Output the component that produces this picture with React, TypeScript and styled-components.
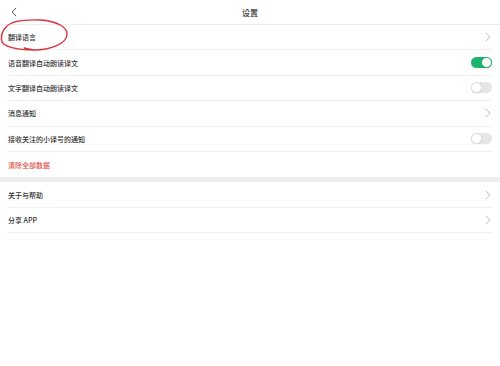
import styled, { createGlobalStyle } from "styled-components";

const GlobalStyle = createGlobalStyle`
  html, body {
    margin: 0;
    padding: 0;
    background: #ffffff;
  }
  body {
    font-family: "Noto Sans CJK SC", "Noto Sans", sans-serif;
    color: #333333;
  }
`;

type Item = {
  label: string;
  kind: "arrow" | "on" | "off" | "none";
  danger?: boolean;
};

const groupOne: Item[] = [
  { label: "翻译语言", kind: "arrow" },
  { label: "语音翻译自动朗读译文", kind: "on" },
  { label: "文字翻译自动朗读译文", kind: "off" },
  { label: "消息通知", kind: "arrow" },
  { label: "接收关注的小译号的通知", kind: "off" },
  { label: "清除全部数据", kind: "none", danger: true },
];

const groupTwo: Item[] = [
  { label: "关于与帮助", kind: "arrow" },
  { label: "分享 APP", kind: "arrow" },
];

const Chevron = ({ left }: { left?: boolean }) => (
  <svg width="6" height="10" viewBox="0 0 6 10" fill="none">
    <path
      d={left ? "M4.8 1.2 L1.2 5 L4.8 8.8" : "M1 1 L5 5 L1 9"}
      stroke={left ? "#444444" : "#bbbbbb"}
      strokeWidth={0.9}
      strokeLinecap="round"
      strokeLinejoin="round"
    />
  </svg>
);

const Row = ({ item, last }: { item: Item; last?: boolean }) => (
  <RowWrap>
    <RowInner $last={last}>
      <Label $danger={item.danger}>{item.label}</Label>
      {item.kind === "arrow" && <Chevron />}
      {item.kind === "on" && (
        <Toggle $on>
          <Knob $on />
        </Toggle>
      )}
      {item.kind === "off" && (
        <Toggle>
          <Knob />
        </Toggle>
      )}
    </RowInner>
  </RowWrap>
);

export default function App() {
  return (
    <Page>
      <GlobalStyle />
      <Header>
        <BackBtn>
          <Chevron left />
        </BackBtn>
        <Title>设置</Title>
      </Header>
      <Group>
        {groupOne.map((it, i) => (
          <Row key={it.label} item={it} last={i === groupOne.length - 1} />
        ))}
      </Group>
      <Spacer />
      <Group>
        {groupTwo.map((it) => (
          <Row key={it.label} item={it} />
        ))}
      </Group>
      {/* hand drawn red mark around the first row */}
      <Circle width="70" height="36" viewBox="0 0 70 36" fill="none">
        <path
          d="M6 9 C11 3, 25 1.5, 40 2 C58 3, 68 10, 67 17 C66 26, 50 32, 34 32 C18 32, 2 29, 1.5 22 C1 16, 3 12, 6 9 M34 32 C30 31.5, 27 31, 24.5 30"
          stroke="#d8333b"
          strokeWidth="1.4"
          strokeLinecap="round"
        />
      </Circle>
    </Page>
  );
}

const Page = styled.div`
  position: relative;
  width: 500px;
  height: 366px;
  background: #ffffff;
`;

const Header = styled.div`
  position: relative;
  height: 24px;
  display: flex;
  align-items: center;
  justify-content: center;
  border-bottom: 1px solid #eeeeee;
`;

const BackBtn = styled.div`
  position: absolute;
  left: 11px;
  top: 7px;
  display: flex;
`;

const Title = styled.div`
  font-size: 8px;
  font-weight: 500;
  color: #333333;
  margin-top: 1px;
`;

const Group = styled.div`
  display: flex;
  flex-direction: column;
`;

const RowWrap = styled.div`
  padding: 0 8px 0 7px;
`;

const RowInner = styled.div<{ $last?: boolean }>`
  height: 25.4px;
  box-sizing: border-box;
  display: flex;
  align-items: center;
  justify-content: space-between;
  border-bottom: ${(p) => (p.$last ? "none" : "1px solid #f0f0f0")};
  padding-right: 1px;
`;

const Label = styled.span<{ $danger?: boolean }>`
  font-size: 7px;
  font-weight: 500;
  color: ${(p) => (p.$danger ? "#e0504a" : "#333333")};
  padding-left: 1px;
`;

const Spacer = styled.div`
  height: 5px;
  background: #eeeeee;
`;

const Toggle = styled.div<{ $on?: boolean }>`
  width: 21px;
  height: 11px;
  border-radius: 6px;
  background: ${(p) => (p.$on ? "#1db56e" : "#e6e6e6")};
  display: flex;
  align-items: center;
  justify-content: ${(p) => (p.$on ? "flex-end" : "flex-start")};
  margin-right: -1px;
`;

const Knob = styled.div<{ $on?: boolean }>`
  width: 11px;
  height: 11px;
  box-sizing: border-box;
  border-radius: 50%;
  background: #ffffff;
  border: 1px solid ${(p) => (p.$on ? "#1db56e" : "#e0e0e0")};
  box-shadow: 0 0.5px 1px rgba(0, 0, 0, 0.12);
`;

const Circle = styled.svg`
  position: absolute;
  left: 0;
  top: 18px;
  pointer-events: none;
`;
